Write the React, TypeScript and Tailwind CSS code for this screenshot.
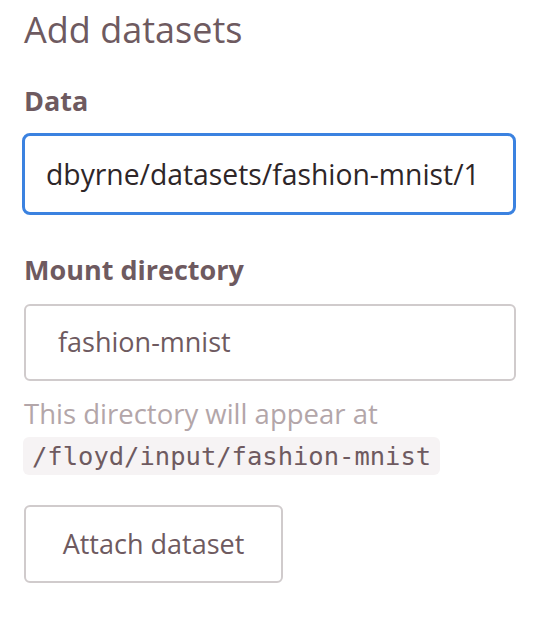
import React from 'react';

const App: React.FC = () => {
  return (
    <div className="min-h-screen w-[538px] bg-white font-['Open_Sans',sans-serif] text-[#6e5a60]">
      <div className="pl-6 pr-[22px] pt-[6px]">
        <h2 className="text-[36px] font-normal leading-[48px]">Add datasets</h2>

        <label className="mt-[30px] block text-[27px] font-bold leading-[34px]">Data</label>
        <div className="mt-[15px] -ml-[2px] flex h-[82px] items-center rounded-[8px] border-[3px] border-[#3b82e0] pl-[21px]">
          <span className="text-[28.3px] text-[#2e2628]">dbyrne/datasets/fashion-mnist/1</span>
        </div>

        <label className="mt-[38px] block text-[27px] font-bold leading-[34px]">Mount directory</label>
        <div className="mt-[17px] flex h-[77px] items-center rounded-[6px] border-2 border-[#d0cbcc] pl-[32px]">
          <span className="text-[27px]">fashion-mnist</span>
        </div>

        <p className="mt-[15px] text-[27.5px] leading-[36px] text-[#b3a6a9]">This directory will appear at</p>
        <div className="mt-[5px] -ml-[1px] inline-block rounded-[6px] bg-[#f6f3f4] px-[9px] py-[2px] font-['DejaVu_Sans_Mono',monospace] text-[25.5px] leading-[34px]">
          /floyd/input/fashion-mnist
        </div>

        <div>
          <button className="mt-[30px] h-[78px] w-[259px] rounded-[6px] border-2 border-[#d0cbcc] bg-white text-[27px] text-[#6e5a60]">
            Attach dataset
          </button>
        </div>
      </div>
    </div>
  );
};

export default App;
